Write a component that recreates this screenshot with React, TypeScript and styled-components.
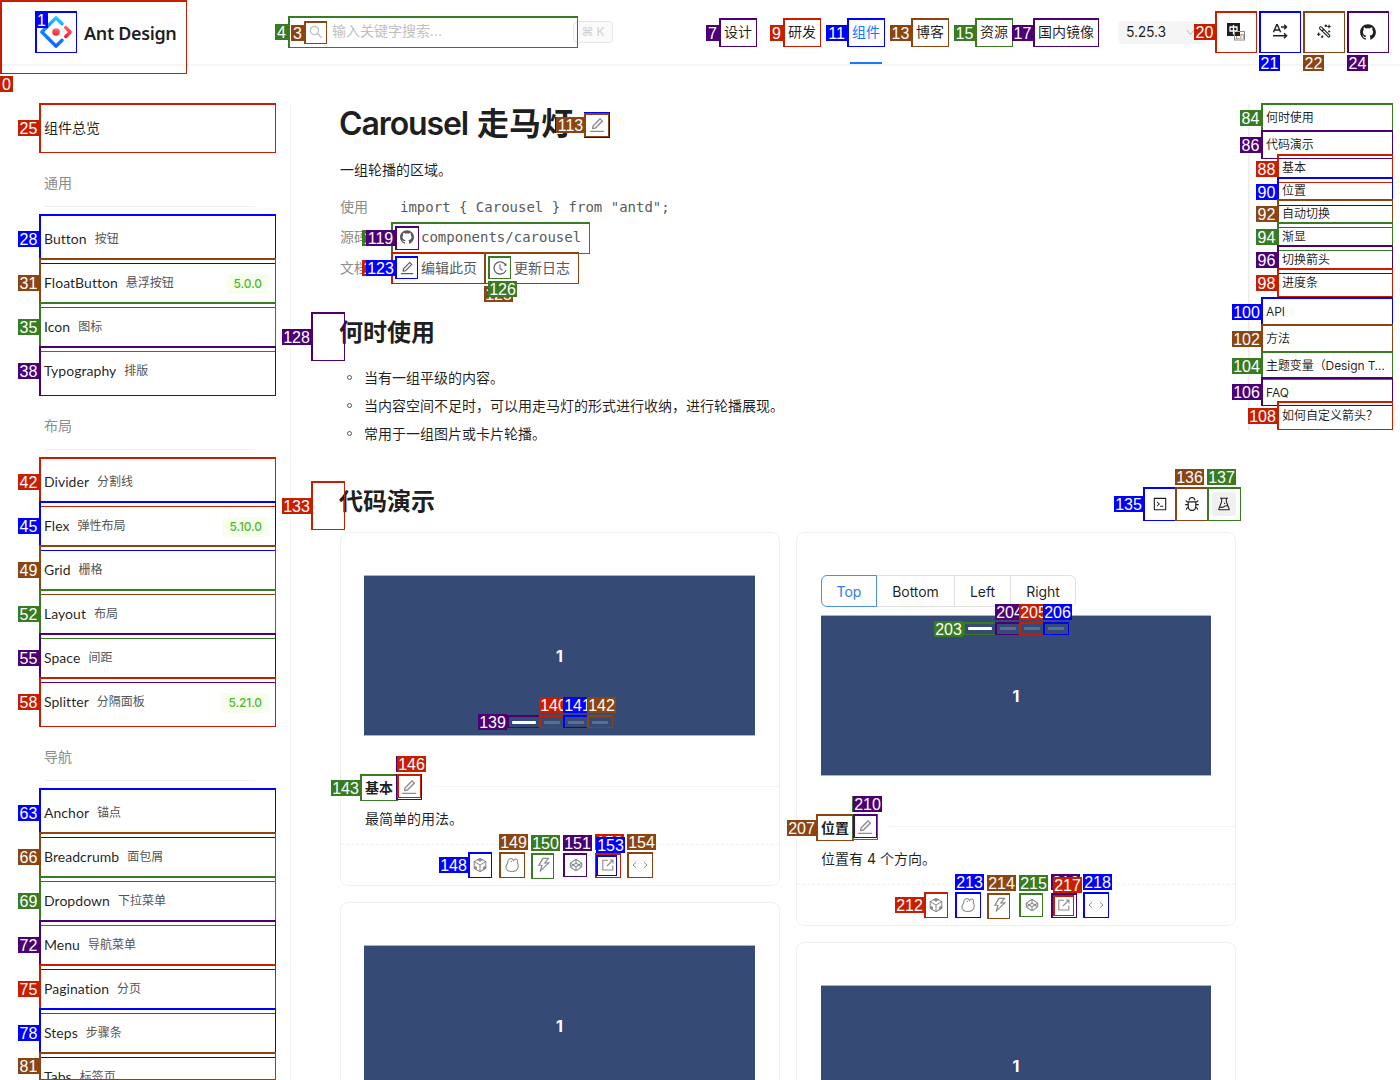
import React from "react";
import styled, { createGlobalStyle, css } from "styled-components";
import {
  AiFillGithub,
  AiOutlineBug,
  AiOutlineCode,
  AiOutlineCodepen,
  AiOutlineCodeSandbox,
  AiOutlineDown,
  AiOutlineEdit,
  AiOutlineExperiment,
  AiOutlineHistory,
  AiOutlineSearch,
  AiOutlineThunderbolt,
} from "react-icons/ai";

const sans = `Inter, "Noto Sans CJK SC", sans-serif`;
const humanist = `Lato, "Noto Sans CJK SC", sans-serif`;
const mono = `"DejaVu Sans Mono", "Noto Sans CJK SC", monospace`;

const GlobalStyle = createGlobalStyle`
  *, *::before, *::after { box-sizing: border-box; }
  body {
    margin: 0;
    background: #fff;
    color: rgba(0, 0, 0, 0.88);
    font-family: ${sans};
    font-size: 14px;
    line-height: 22px;
  }
  a { color: inherit; text-decoration: none; }
  ul, h1, h2, p { margin: 0; padding: 0; }
  svg { display: block; flex: none; }
`;

const Page = styled.div`
  position: relative;
  width: 1400px;
  height: 1080px;
  overflow: hidden;
`;

/* ---------- Header ---------- */

const Header = styled.header`
  display: flex;
  align-items: center;
  height: 64px;
  padding-left: 40px;
  box-shadow: 0 1px 2px rgba(0, 0, 0, 0.05), 0 1px 4px rgba(0, 0, 0, 0.03);
`;

const Brand = styled.a`
  display: flex;
  align-items: center;
  gap: 12px;
  width: 265px;
  font: 600 18px/32px "Noto Sans", "Open Sans", sans-serif;
  letter-spacing: -0.35px;
  white-space: nowrap;
`;

const BrandName = styled.span`
  padding-top: 2px;
`;

const SearchBox = styled.div`
  display: flex;
  align-items: center;
  width: 268px;
  padding-left: 3px;
  color: #bfbfbf;
`;

const SearchText = styled.span`
  margin: -2px 0 0 8px;
  letter-spacing: -0.02px;
`;

const Keys = styled.kbd`
  display: flex;
  align-items: center;
  justify-content: center;
  gap: 3px;
  width: 40px;
  height: 22px;
  border: 1px solid #e6e6e6;
  border-radius: 4px;
  background: #fafafa;
  color: #ced0d4;
  font: 12px/20px ${sans};
`;

const Nav = styled.nav`
  display: flex;
  gap: 36px;
  height: 64px;
  margin-left: 111px;
`;

const NavLink = styled.a<{ $active?: boolean; $pull?: boolean }>`
  padding-top: 21px;
  height: 64px;
  white-space: nowrap;
  ${(p) => p.$pull && css`margin-left: -6px;`}
  ${(p) =>
    p.$active &&
    css`
      color: #1677ff;
      padding-inline: 2px;
      margin-inline: -2px;
      border-bottom: 2px solid #1677ff;
    `}
`;

const Version = styled.div`
  display: flex;
  align-items: center;
  justify-content: space-between;
  width: 88px;
  height: 23px;
  margin-left: 24px;
  padding: 0 10px 0 8px;
  border-radius: 4px;
  background: #f5f5f5;
  letter-spacing: -0.2px;
  svg { color: #bfbfbf; }
`;

const HeaderTools = styled.div`
  display: flex;
  gap: 12px;
  margin-left: 14px;
`;

const HeaderTool = styled.span`
  display: flex;
  align-items: center;
  justify-content: center;
  width: 32px;
  height: 32px;
`;

/* ---------- Body ---------- */

const Body = styled.div`
  display: flex;
  align-items: flex-start;
  padding-top: 40px;
`;

const Sidebar = styled.aside`
  width: 291px;
  height: 976px;
  padding: 2px 20px 0 44px;
  border-right: 1px solid #f3f3f3;
  overflow: hidden;
`;

const MenuItem = styled.a`
  display: flex;
  align-items: center;
  height: 44px;
  font-family: ${humanist};
  font-size: 14px;
  line-height: 22px;
  letter-spacing: 0.04px;
  white-space: nowrap;
`;

const MenuSub = styled.span`
  margin-left: 8px;
  font-size: 12px;
  letter-spacing: 0;
  color: #555;
`;

const Tag = styled.span`
  margin: 1px 1px 0 auto;
  padding: 0 7px;
  border-radius: 4px;
  background: #f6ffed;
  color: #52b82a;
  font: 500 12px/20px ${sans};
  letter-spacing: -0.1px;
`;

const MenuTitle = styled.div`
  width: 211px;
  height: 57px;
  margin-bottom: 10px;
  padding-top: 22px;
  border-bottom: 1px solid #efefef;
  color: #8c8c8c;
`;

const Main = styled.main`
  width: 896px;
  margin-left: 49px;
`;

const Title = styled.h1`
  display: flex;
  align-items: center;
  height: 40px;
  margin-left: -1px;
  font-size: 32px;
  line-height: 40px;
  font-weight: 600;
  color: #1f1f1f;
  letter-spacing: -1.1px;
  svg { margin-left: 15px; margin-top: 1px; color: #8c8c8c; }
`;

const TitleCjk = styled.span`
  margin-left: 9px;
  letter-spacing: -0.1px;
`;

const Intro = styled.p`
  margin-top: 15px;
`;

const Facts = styled.div`
  display: grid;
  grid-template-columns: 60px auto;
  grid-auto-rows: 30.3px;
  align-items: center;
  margin-top: 11px;
  color: #8c8c8c;
`;

const FactValue = styled.div`
  display: flex;
  align-items: center;
  color: #5a5a5a;
`;

const Code = styled.code`
  font: 14px/22px ${mono};
  white-space: pre;
`;

const FactLink = styled.a`
  display: flex;
  align-items: center;
  gap: 6px;
  margin-right: 16px;
  svg { margin-left: -1px; }
`;

const Heading = styled.h2`
  height: 32px;
  margin-left: -1px;
  font-size: 24px;
  line-height: 32px;
  font-weight: 600;
  color: #1f1f1f;
`;

const WhenHeading = styled(Heading)`
  margin-top: 34px;
`;

const Bullets = styled.ul`
  margin-top: 15px;
  list-style: none;
`;

const Bullet = styled.li`
  display: flex;
  align-items: center;
  height: 28px;
  &::before {
    content: "";
    width: 5px;
    height: 5px;
    margin: 0 12px 0 7px;
    border: 1px solid #555;
    border-radius: 50%;
  }
`;

const DemoHead = styled.div`
  display: flex;
  justify-content: space-between;
  align-items: flex-start;
  height: 46px;
  margin-top: 38.3px;
`;

const DemoTools = styled.div`
  display: flex;
  gap: 8px;
  margin-top: 6px;
`;

const DemoTool = styled.span<{ $on?: boolean }>`
  display: flex;
  align-items: center;
  justify-content: center;
  width: 24px;
  height: 24px;
  border-radius: 4px;
  background: ${(p) => (p.$on ? "#f0f0f0" : "transparent")};
`;

const Columns = styled.div`
  display: grid;
  grid-template-columns: 440px 440px;
  gap: 16px;
  align-items: start;
`;

const Column = styled.div`
  display: flex;
  flex-direction: column;
  gap: 16px;
`;

const Card = styled.section`
  border: 1px solid #f0f0f0;
  border-radius: 8px;
`;

const Demo = styled.div<{ $wide?: boolean }>`
  padding: 42px 24px 50px ${(p) => (p.$wide ? 23 : 24)}px;
`;

const Radios = styled.div`
  display: flex;
  width: max-content;
  margin-bottom: 8px;
`;

const Radio = styled.span<{ $width: number; $on?: boolean }>`
  width: ${(p) => p.$width}px;
  height: 32px;
  margin-left: -1px;
  border: 1px solid ${(p) => (p.$on ? "#4f8fe8" : "#e0e0e0")};
  color: ${(p) => (p.$on ? "#2f7be5" : "inherit")};
  line-height: 31px;
  text-align: center;
  letter-spacing: -0.05px;
  position: relative;
  z-index: ${(p) => (p.$on ? 1 : 0)};
  &:first-child { margin-left: 0; border-radius: 6px 0 0 6px; }
  &:last-child { border-radius: 0 6px 6px 0; }
`;

const Slide = styled.div`
  position: relative;
  display: flex;
  align-items: center;
  justify-content: center;
  height: 161px;
  border: solid #a3b4d2;
  border-width: 1px 0;
  background: #354b76;
  background-clip: padding-box;
  color: #fff;
  font-size: 16px;
  font-weight: 700;
`;

const Dots = styled.div<{ $top?: boolean }>`
  position: absolute;
  left: 0;
  right: 0;
  ${(p) => (p.$top ? "top: 11px;" : "bottom: 11px;")}
  display: flex;
  justify-content: center;
  gap: 8px;
`;

const Dot = styled.i<{ $on?: boolean }>`
  width: ${(p) => (p.$on ? 24 : 16)}px;
  height: 3px;
  border-radius: 1px;
  background: #fff;
  opacity: ${(p) => (p.$on ? 1 : 0.2)};
`;

const MetaTitle = styled.div`
  display: flex;
  align-items: center;
  height: 28px;
  margin-top: -14px;
  padding: 3px 0 0 24px;
  font-weight: 600;
  svg { margin: -2px 15px 0 7px; color: #8c8c8c; }
  &::after {
    content: "";
    flex: 1;
    height: 1px;
    margin-top: -3px;
    background: #f3f3f3;
  }
`;

const MetaText = styled.p`
  padding: 8px 24px 14px;
`;

const Actions = styled.div`
  display: flex;
  justify-content: center;
  gap: 16px;
  height: 41px;
  padding-top: 12px;
  border-top: 1px dashed #f0f0f0;
  color: #8c8c8c;
`;

const Action = styled.span`
  display: flex;
  align-items: center;
  justify-content: center;
  width: 16px;
  height: 16px;
`;

const Toc = styled.nav`
  width: 145px;
  height: 327px;
  margin-left: 12px;
  padding-left: 16px;
  border-left: 2px solid #f0f0f0;
  font-size: 12px;
  white-space: nowrap;
`;

const TocLink = styled.a`
  display: block;
  width: 120px;
  height: 27px;
  line-height: 28px;
  overflow: hidden;
  text-overflow: ellipsis;
  letter-spacing: -0.08px;
`;

const TocGroup = styled.div`
  margin: -2px 0 4px;
  padding-left: 16px;
`;

const TocSub = styled.a`
  display: block;
  height: 23px;
  line-height: 24px;
`;

/* ---------- Numbered element marks ---------- */

const MarkBox = styled.div<{ $c: string; $x: number; $y: number; $r: number; $b: number }>`
  position: absolute;
  z-index: 2;
  left: ${(p) => p.$x}px;
  top: ${(p) => p.$y}px;
  width: ${(p) => p.$r - p.$x}px;
  height: ${(p) => p.$b - p.$y}px;
  border: solid ${(p) => p.$c};
  border-width: 2px 1px 1px 2px;
`;

const MarkLabel = styled.span<{ $c: string; $x: number; $y: number; $n: number }>`
  position: absolute;
  z-index: 2;
  left: ${(p) => p.$x}px;
  top: ${(p) => p.$y}px;
  display: flex;
  justify-content: center;
  width: ${(p) => 5 + 8 * p.$n}px;
  height: 16px;
  background: ${(p) => p.$c};
  color: #fff;
  font: 16px/17px "Liberation Sans", Arial, sans-serif;
  overflow: hidden;
`;

const tones = { r: "#c81e00", b: "#0000ff", o: "#8b4513", g: "#387b22", p: "#4b0073" };
type Tone = keyof typeof tones;
type MarkData = [number, Tone, number, number, number, number, number, number];

// number, tone, left, top, right, bottom, label left, label top
const marks: MarkData[] = [
  [0, "r", 0, 0, 187, 74, 0, 76],
  [1, "b", 35, 11, 77, 53, 35, 12],
  [3, "o", 304, 21, 327, 44, 291, 25],
  [4, "g", 288, 16, 578, 48, 275, 24],
  [7, "p", 719, 18, 757, 47, 706, 25],
  [9, "r", 783, 18, 821, 47, 770, 25],
  [11, "b", 847, 18, 885, 47, 826, 25],
  [13, "o", 911, 18, 949, 47, 890, 25],
  [15, "g", 975, 18, 1013, 47, 954, 25],
  [17, "p", 1033, 18, 1099, 47, 1012, 25],
  [20, "r", 1215, 11, 1257, 53, 1194, 24],
  [21, "b", 1259, 11, 1301, 53, 1259, 55],
  [22, "o", 1303, 11, 1345, 53, 1303, 55],
  [24, "p", 1347, 11, 1389, 53, 1347, 55],
  [25, "r", 39, 103, 276, 153, 18, 120],
  [28, "b", 39, 214, 276, 264, 18, 231],
  [31, "o", 39, 258, 276, 308, 18, 275],
  [35, "g", 39, 302, 276, 352, 18, 319],
  [38, "p", 39, 346, 276, 396, 18, 363],
  [42, "r", 39, 457, 276, 507, 18, 474],
  [45, "b", 39, 501, 276, 551, 18, 518],
  [49, "o", 39, 545, 276, 595, 18, 562],
  [52, "g", 39, 589, 276, 639, 18, 606],
  [55, "p", 39, 633, 276, 683, 18, 650],
  [58, "r", 39, 677, 276, 727, 18, 694],
  [63, "b", 39, 788, 276, 838, 18, 805],
  [66, "o", 39, 832, 276, 882, 18, 849],
  [69, "g", 39, 876, 276, 926, 18, 893],
  [72, "p", 39, 920, 276, 970, 18, 937],
  [75, "r", 39, 964, 276, 1014, 18, 981],
  [78, "b", 39, 1008, 276, 1058, 18, 1025],
  [81, "o", 39, 1052, 276, 1080, 18, 1058],
  [84, "g", 1261, 103, 1393, 132, 1240, 110],
  [86, "p", 1261, 130, 1393, 159, 1240, 137],
  [88, "r", 1277, 154, 1393, 183, 1256, 161],
  [90, "b", 1277, 177, 1393, 206, 1256, 184],
  [92, "o", 1277, 199, 1393, 228, 1256, 206],
  [94, "g", 1277, 222, 1393, 251, 1256, 229],
  [96, "p", 1277, 245, 1393, 274, 1256, 252],
  [98, "r", 1277, 268, 1393, 297, 1256, 275],
  [100, "b", 1261, 297, 1393, 326, 1232, 304],
  [102, "o", 1261, 324, 1393, 353, 1232, 331],
  [104, "g", 1261, 351, 1393, 380, 1232, 358],
  [106, "p", 1261, 377, 1393, 406, 1232, 384],
  [108, "r", 1277, 401, 1393, 430, 1248, 408],
  [112, "b", 584, 112, 610, 138, 555, 117],
  [113, "o", 584, 113, 609, 137, 556, 117],
  [118, "g", 391, 222, 590, 254, 362, 230],
  [119, "p", 395, 226, 419, 250, 366, 230],
  [122, "r", 391, 252, 486, 284, 362, 260],
  [123, "b", 395, 256, 418, 279, 366, 260],
  [125, "o", 484, 252, 579, 284, 484, 286],
  [126, "g", 488, 256, 511, 279, 488, 281],
  [128, "p", 311, 312, 345, 361, 282, 329],
  [133, "r", 311, 481, 345, 530, 282, 498],
  [135, "b", 1143, 487, 1177, 521, 1114, 496],
  [136, "o", 1175, 487, 1209, 521, 1175, 469],
  [137, "g", 1207, 487, 1241, 521, 1207, 469],
  [139, "p", 507, 715, 541, 728, 478, 714],
  [140, "r", 539, 715, 565, 728, 539, 697],
  [141, "b", 563, 715, 589, 728, 563, 697],
  [142, "o", 587, 715, 613, 728, 587, 697],
  [143, "g", 360, 774, 398, 801, 331, 780],
  [145, "p", 396, 774, 422, 800, 396, 756],
  [146, "r", 397, 774, 421, 798, 397, 756],
  [148, "b", 468, 852, 492, 878, 439, 857],
  [149, "o", 499, 852, 525, 878, 499, 834],
  [150, "g", 531, 853, 554, 879, 531, 835],
  [151, "p", 563, 853, 587, 877, 563, 835],
  [152, "r", 595, 853, 621, 878, 595, 834],
  [153, "b", 596, 855, 617, 876, 596, 837],
  [154, "o", 627, 852, 653, 878, 627, 834],
  [203, "g", 963, 622, 997, 635, 934, 621],
  [204, "p", 995, 622, 1021, 635, 995, 604],
  [205, "r", 1019, 622, 1045, 635, 1019, 604],
  [206, "b", 1043, 622, 1069, 635, 1043, 604],
  [207, "o", 816, 814, 854, 841, 787, 820],
  [209, "g", 852, 814, 878, 840, 852, 796],
  [210, "p", 853, 814, 877, 838, 853, 796],
  [212, "r", 924, 892, 948, 918, 895, 897],
  [213, "b", 955, 892, 981, 918, 955, 874],
  [214, "o", 987, 893, 1010, 919, 987, 875],
  [215, "g", 1019, 893, 1043, 917, 1019, 875],
  [216, "p", 1051, 893, 1077, 918, 1051, 874],
  [217, "r", 1053, 895, 1074, 916, 1053, 877],
  [218, "b", 1083, 892, 1109, 918, 1083, 874],
];

/* ---------- Drawings ---------- */

const Logo = () => (
  <svg width="32" height="32" viewBox="0 0 200 200">
    <defs>
      <linearGradient id="blue" x1="0.6" y1="0" x2="0.4" y2="1">
        <stop offset="0" stopColor="#29cdff" />
        <stop offset="0.4" stopColor="#148eff" />
        <stop offset="1" stopColor="#0a60ff" />
      </linearGradient>
      <linearGradient id="red" x1="0.7" y1="0" x2="0.5" y2="1">
        <stop offset="0" stopColor="#fa816e" />
        <stop offset="0.4" stopColor="#f74a5c" />
        <stop offset="1" stopColor="#f51d2c" />
      </linearGradient>
    </defs>
    <path fill="url(#blue)" d="M91.6 4.2L4.2 91.5c-4.7 4.7-4.7 12.3 0 17l87.4 87.3c4.7 4.7 12.3 4.7 17 0l36.6-36.6c4.2-4.2 4.2-11 0-15.2-4.2-4.2-11-4.2-15.2 0l-27.8 27.7c-1.2 1.2-2.9 1.2-4.1 0L28.3 102c-1.2-1.2-1.2-2.9 0-4.1l69.8-69.8c1.2-1.2 2.9-1.2 4.1 0L130 55.9c4.2 4.2 11 4.2 15.2 0 4.2-4.2 4.2-11 0-15.2L108.6 4.1c-4.7-4.6-12.3-4.6-17 .1z" />
    <path fill="url(#red)" d="M153.7 135.9c4.2 4.2 11 4.2 15.2 0l27-27c4.7-4.7 4.7-12.3 0-17l-27.2-27.2c-4.2-4.2-11-4.2-15.3 0-4.2 4.2-4.2 11 0 15.2l18.5 18.5c1.2 1.2 1.2 2.9 0 4.1l-18.2 18.1c-4.2 4.2-4.2 11 0 15.3z" />
    <circle cx="100.5" cy="100.4" r="23.6" fill="url(#red)" />
  </svg>
);

const LangIcon = () => (
  <svg width="20" height="18" viewBox="0 0 20 18">
    <rect x="8.5" y="8.5" width="10" height="8.5" fill="#fff" stroke="#888" />
    <text x="9.4" y="15.8" fontSize="7.5" fill="#666" fontFamily="Inter, sans-serif">En</text>
    <rect x="1" y="0" width="13" height="13" fill="#1f1f1f" />
    <path d="M4 4h7v4H4zM7.5 2v9.5" fill="none" stroke="#fff" strokeWidth="1.3" />
    <path d="M8.5 13.5v-5H14" fill="none" stroke="#ccc" strokeWidth="0.8" />
  </svg>
);

const DirectionIcon = () => (
  <svg width="16" height="16" viewBox="0 0 16 16" fill="none" stroke="#1f1f1f" strokeWidth="1.4">
    <path d="M1.4 8.2L4.7.8h.6l3.3 7.4M2.5 6h5M9 3h5.2M12.2.8L14.5 3l-2.3 2.2M1 11.8h13.4M12 9.3l2.6 2.5-2.6 2.5" />
  </svg>
);

const WandIcon = () => (
  <svg width="16" height="16" viewBox="0 0 16 16" fill="none" stroke="#1f1f1f" strokeWidth="1.15">
    <path d="M3.9 3.2c.5-.6 1.2-.6 1.8 0l7.8 8c.5.5.5 1 0 1.5s-1 .5-1.5 0L3.9 4.9c-.5-.6-.5-1.2 0-1.7zM6 7l2-2" />
    <path d="M9.8.5v2.6M8.5 1.8h2.6M13 .8v3.4M11.3 2.5h3.4M2.7 8.5v3.4M1 10.2h3.4M13.2 6.5v2M12.2 7.5h2M6.2 11.5v2.4M5 12.7h2.4" />
  </svg>
);

const BearIcon = () => (
  <svg width="16" height="16" viewBox="0 0 16 16" fill="none" stroke="currentColor" strokeWidth="1.1" strokeLinejoin="round">
    <path d="M4.9 2.5C6.1 1.2 8 1.3 9 2.6c.3.4.5.9.8 1 .6-1.3 1.7-1.8 2.7-1.4 1.2.5 1.4 1.9.7 3 .9 1.6 1.2 3.3.9 5-.5 2.9-2.5 4.3-5.9 4.3-3.6 0-6.2-1.3-6.2-4.3 0-1.7.6-3 1.7-4.1-.1-1.4.3-2.6 1.2-3.6z" />
    <path d="M7.8 3.8l-.9 1.1" />
  </svg>
);

const OpenIcon = () => (
  <svg width="14" height="14" viewBox="0 0 14 14" fill="none" stroke="currentColor" strokeWidth="1.1">
    <path d="M7 2.2H1.8V12h10V7.5M6 8l5.5-5.5M8.6 2H12v3.4" />
  </svg>
);

const ExpandIcon = () => (
  <svg width="16" height="16" viewBox="0 0 16 16" fill="none" stroke="currentColor" strokeWidth="1">
    <path d="M4.3 5L1 8l3.3 3M11.7 5L15 8l-3.3 3" />
  </svg>
);

/* ---------- Content ---------- */

type Entry = { name: string; cn: string; tag?: string };

const groups: { title: string; items: Entry[] }[] = [
  {
    title: "通用",
    items: [
      { name: "Button", cn: "按钮" },
      { name: "FloatButton", cn: "悬浮按钮", tag: "5.0.0" },
      { name: "Icon", cn: "图标" },
      { name: "Typography", cn: "排版" },
    ],
  },
  {
    title: "布局",
    items: [
      { name: "Divider", cn: "分割线" },
      { name: "Flex", cn: "弹性布局", tag: "5.10.0" },
      { name: "Grid", cn: "栅格" },
      { name: "Layout", cn: "布局" },
      { name: "Space", cn: "间距" },
      { name: "Splitter", cn: "分隔面板", tag: "5.21.0" },
    ],
  },
  {
    title: "导航",
    items: [
      { name: "Anchor", cn: "锚点" },
      { name: "Breadcrumb", cn: "面包屑" },
      { name: "Dropdown", cn: "下拉菜单" },
      { name: "Menu", cn: "导航菜单" },
      { name: "Pagination", cn: "分页" },
      { name: "Steps", cn: "步骤条" },
      { name: "Tabs", cn: "标签页" },
    ],
  },
];

const Carousel = ({ top }: { top?: boolean }) => (
  <Slide>
    1
    <Dots $top={top}>
      <Dot $on />
      <Dot />
      <Dot />
      <Dot />
    </Dots>
  </Slide>
);

const Meta = ({ title, text }: { title: string; text: string }) => (
  <>
    <MetaTitle>
      {title}
      <AiOutlineEdit size={18} />
    </MetaTitle>
    <MetaText>{text}</MetaText>
    <Actions>
      <Action><AiOutlineCodeSandbox size={18} /></Action>
      <Action><BearIcon /></Action>
      <Action><AiOutlineThunderbolt size={18} /></Action>
      <Action><AiOutlineCodepen size={16} /></Action>
      <Action><OpenIcon /></Action>
      <Action><ExpandIcon /></Action>
    </Actions>
  </>
);

export default function App() {
  return (
    <Page>
      <GlobalStyle />
      <Header>
        <Brand>
          <Logo />
          <BrandName>Ant Design</BrandName>
        </Brand>
        <SearchBox>
          <AiOutlineSearch size={16} />
          <SearchText>输入关键字搜索...</SearchText>
        </SearchBox>
        <Keys>
          <span>⌘</span>
          <span>K</span>
        </Keys>
        <Nav>
          <NavLink>设计</NavLink>
          <NavLink>研发</NavLink>
          <NavLink $active>组件</NavLink>
          <NavLink>博客</NavLink>
          <NavLink>资源</NavLink>
          <NavLink $pull>国内镜像</NavLink>
        </Nav>
        <Version>
          5.25.3
          <AiOutlineDown size={11} />
        </Version>
        <HeaderTools>
          <HeaderTool><LangIcon /></HeaderTool>
          <HeaderTool><DirectionIcon /></HeaderTool>
          <HeaderTool><WandIcon /></HeaderTool>
          <HeaderTool><AiFillGithub size={18} /></HeaderTool>
        </HeaderTools>
      </Header>

      <Body>
        <Sidebar>
          <MenuItem>组件总览</MenuItem>
          {groups.map((group) => (
            <React.Fragment key={group.title}>
              <MenuTitle>{group.title}</MenuTitle>
              {group.items.map((item) => (
                <MenuItem key={item.name}>
                  {item.name}
                  <MenuSub>{item.cn}</MenuSub>
                  {item.tag && <Tag>{item.tag}</Tag>}
                </MenuItem>
              ))}
            </React.Fragment>
          ))}
        </Sidebar>

        <Main>
          <Title>
            Carousel
            <TitleCjk>走马灯</TitleCjk>
            <AiOutlineEdit size={18} />
          </Title>
          <Intro>一组轮播的区域。</Intro>
          <Facts>
            <span>使用</span>
            <FactValue>
              <Code>{`import { Carousel } from "antd";`}</Code>
            </FactValue>
            <span>源码</span>
            <FactValue>
              <FactLink>
                <AiFillGithub size={16} />
                <Code>components/carousel</Code>
              </FactLink>
            </FactValue>
            <span>文档</span>
            <FactValue>
              <FactLink>
                <AiOutlineEdit size={16} />
                编辑此页
              </FactLink>
              <FactLink>
                <AiOutlineHistory size={16} />
                更新日志
              </FactLink>
            </FactValue>
          </Facts>

          <WhenHeading>何时使用</WhenHeading>
          <Bullets>
            <Bullet>当有一组平级的内容。</Bullet>
            <Bullet>当内容空间不足时，可以用走马灯的形式进行收纳，进行轮播展现。</Bullet>
            <Bullet>常用于一组图片或卡片轮播。</Bullet>
          </Bullets>

          <DemoHead>
            <Heading>代码演示</Heading>
            <DemoTools>
              <DemoTool><AiOutlineCode size={16} /></DemoTool>
              <DemoTool><AiOutlineBug size={16} /></DemoTool>
              <DemoTool $on><AiOutlineExperiment size={16} /></DemoTool>
            </DemoTools>
          </DemoHead>

          <Columns>
            <Column>
              <Card>
                <Demo $wide><Carousel /></Demo>
                <Meta title="基本" text="最简单的用法。" />
              </Card>
              <Card>
                <Demo $wide><Carousel /></Demo>
              </Card>
            </Column>
            <Column>
              <Card>
                <Demo>
                  <Radios>
                    <Radio $width={56} $on>Top</Radio>
                    <Radio $width={79}>Bottom</Radio>
                    <Radio $width={57}>Left</Radio>
                    <Radio $width={66}>Right</Radio>
                  </Radios>
                  <Carousel top />
                </Demo>
                <Meta title="位置" text="位置有 4 个方向。" />
              </Card>
              <Card>
                <Demo><Carousel /></Demo>
              </Card>
            </Column>
          </Columns>
        </Main>

        <Toc>
          <TocLink>何时使用</TocLink>
          <TocLink>代码演示</TocLink>
          <TocGroup>
            <TocSub>基本</TocSub>
            <TocSub>位置</TocSub>
            <TocSub>自动切换</TocSub>
            <TocSub>渐显</TocSub>
            <TocSub>切换箭头</TocSub>
            <TocSub>进度条</TocSub>
          </TocGroup>
          <TocLink>API</TocLink>
          <TocLink>方法</TocLink>
          <TocLink>主题变量（Design Token）</TocLink>
          <TocLink>FAQ</TocLink>
          <TocGroup>
            <TocSub>如何自定义箭头？</TocSub>
          </TocGroup>
        </Toc>
      </Body>

      {marks.map(([n, tone, x, y, r, b, lx, ly]) => (
        <React.Fragment key={n}>
          <MarkBox $c={tones[tone]} $x={x} $y={y} $r={r} $b={b} />
          <MarkLabel $c={tones[tone]} $x={lx} $y={ly} $n={String(n).length}>
            {n}
          </MarkLabel>
        </React.Fragment>
      ))}
    </Page>
  );
}
